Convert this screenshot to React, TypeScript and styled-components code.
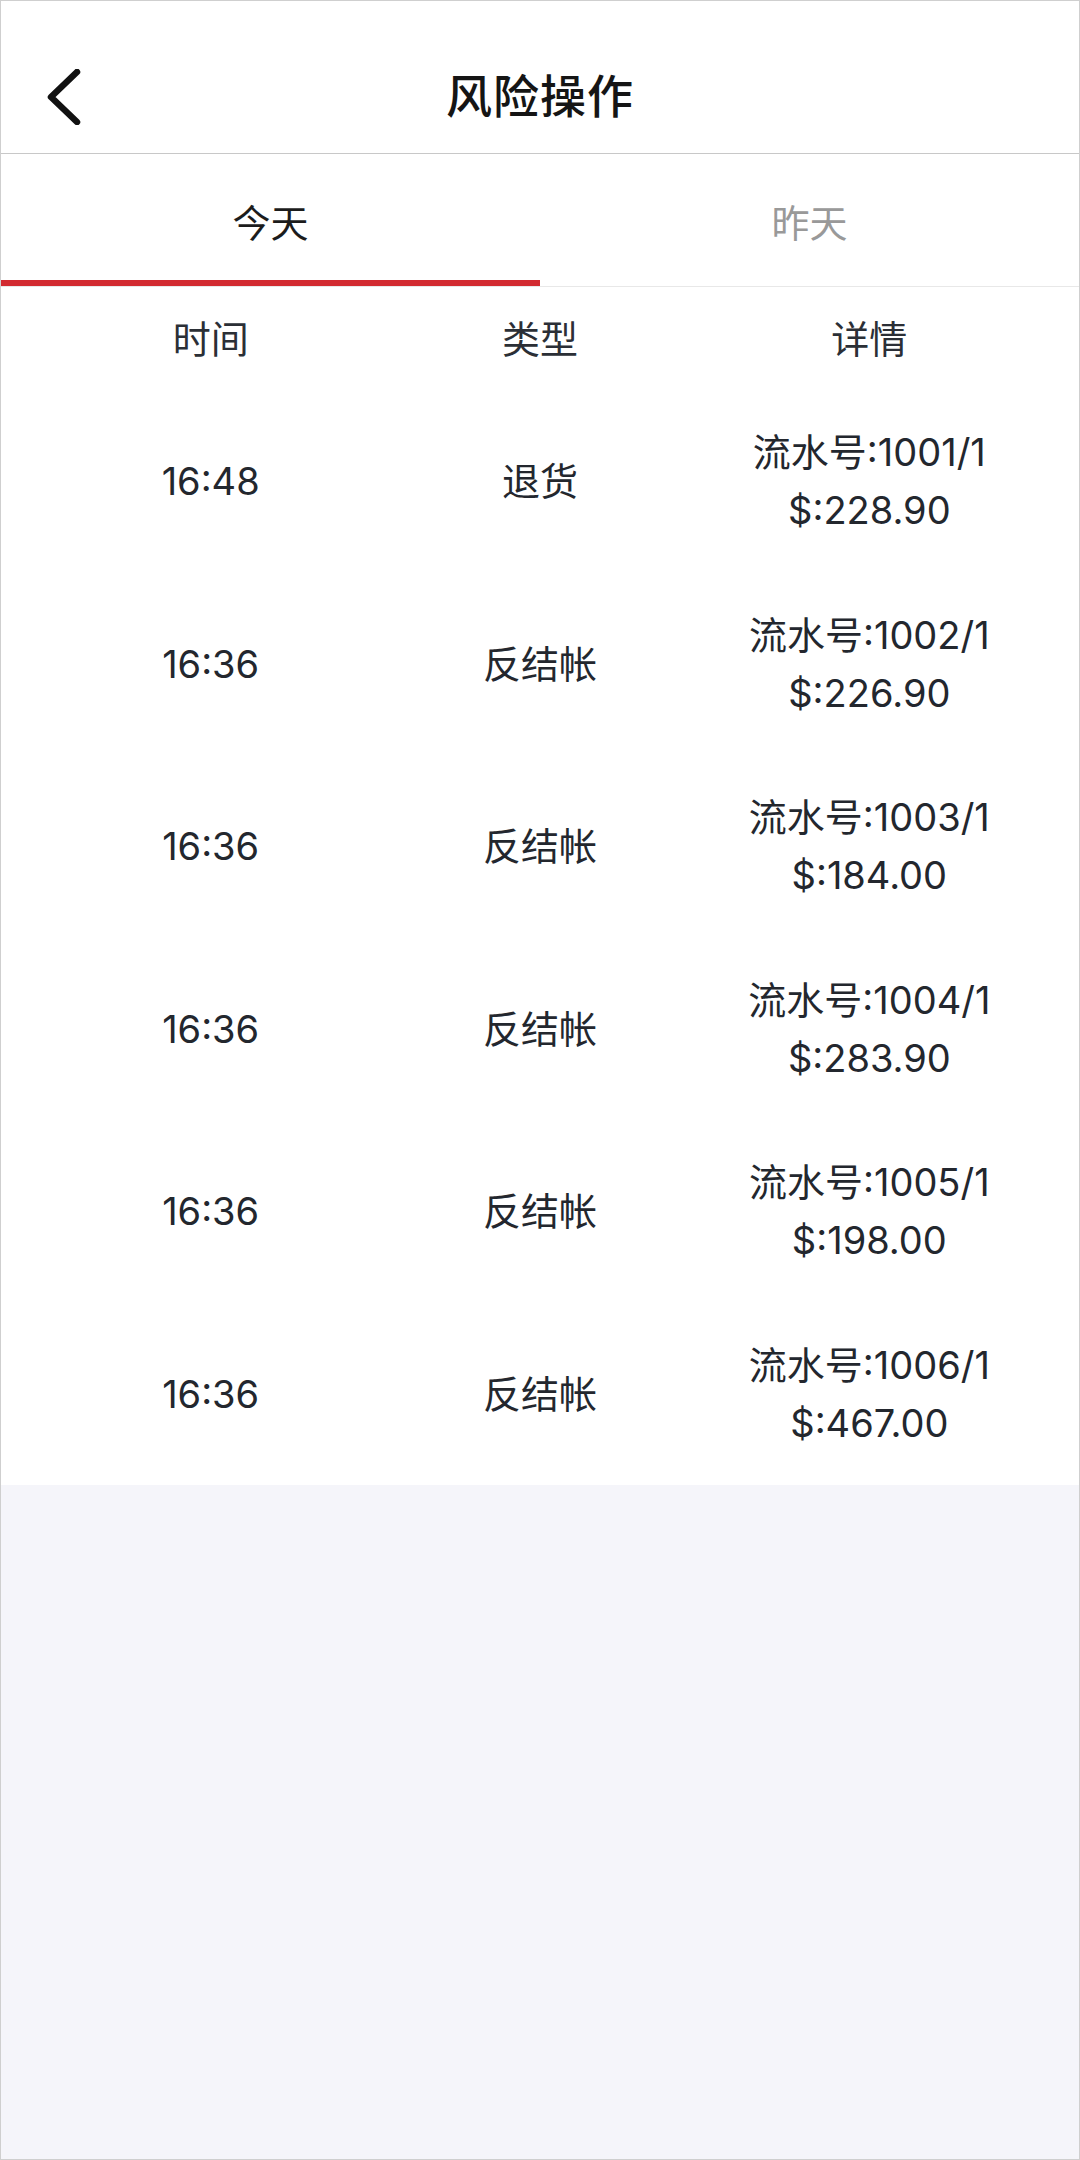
import React, { useState } from "react";
import styled, { createGlobalStyle } from "styled-components";

const GlobalStyle = createGlobalStyle`
  html, body {
    margin: 0;
    padding: 0;
    background: #f5f5fa;
  }
  * {
    box-sizing: border-box;
  }
`;

const FONT = `Inter, "Noto Sans CJK SC", "Noto Sans", sans-serif`;

const Page = styled.div`
  width: 1080px;
  min-height: 2160px;
  border: 1px solid #cfcfcf;
  background: #f5f5fa;
  display: flex;
  flex-direction: column;
  font-family: ${FONT};
  color: #23272e;
`;

const Header = styled.header`
  height: 153px;
  padding-top: 32px;
  background: #fff;
  border-bottom: 1px solid #c8c8c8;
  display: grid;
  grid-template-columns: 1fr auto 1fr;
  align-items: center;
`;

const BackButton = styled.button`
  justify-self: start;
  margin-left: 43px;
  margin-top: 8px;
  padding: 0;
  border: none;
  background: none;
  display: flex;
  cursor: pointer;
`;

const Title = styled.h1`
  margin: 0;
  font-size: 46px;
  font-weight: 500;
  color: #151515;
  letter-spacing: 1px;
`;

const TabBar = styled.nav`
  height: 133px;
  background: #fff;
  border-bottom: 1px solid #e8e8e8;
  display: grid;
  grid-template-columns: 1fr 1fr;
`;

const Tab = styled.div<{ $active?: boolean }>`
  display: flex;
  align-items: center;
  justify-content: center;
  font-size: 38px;
  color: ${(p) => (p.$active ? "#1c1c1c" : "#999999")};
  box-shadow: ${(p) => (p.$active ? "inset 0 -6px 0 #d22a30" : "none")};
  cursor: pointer;
`;

const Table = styled.section`
  background: #fff;
  padding: 0 45px;
`;

const HeadRow = styled.div`
  height: 103px;
  display: grid;
  grid-template-columns: repeat(3, 1fr);
  align-items: center;
`;

const Row = styled.div`
  height: 182.5px;
  display: grid;
  grid-template-columns: repeat(3, 1fr);
  align-items: center;
`;

const Cell = styled.div`
  text-align: center;
  font-size: 38px;
  line-height: 58px;
  color: #23272e;
  white-space: nowrap;
`;

const HeadCell = styled(Cell)`
  color: #2b2f36;
`;

type Record = {
  time: string;
  type: string;
  serial: string;
  amount: string;
};

const today: Array<Record> = [
  { time: "16:48", type: "退货", serial: "1001/1", amount: "228.90" },
  { time: "16:36", type: "反结帐", serial: "1002/1", amount: "226.90" },
  { time: "16:36", type: "反结帐", serial: "1003/1", amount: "184.00" },
  { time: "16:36", type: "反结帐", serial: "1004/1", amount: "283.90" },
  { time: "16:36", type: "反结帐", serial: "1005/1", amount: "198.00" },
  { time: "16:36", type: "反结帐", serial: "1006/1", amount: "467.00" },
];

const ChevronLeft = () => (
  <svg width="40" height="56" viewBox="0 0 40 56" fill="none">
    <path
      d="M33 3L7 28L33 53"
      stroke="#111"
      strokeWidth="6.5"
      strokeLinecap="round"
      strokeLinejoin="round"
    />
  </svg>
);

export default function App() {
  const [tab, setTab] = useState<number>(0);
  const list = tab === 0 ? today : [];

  return (
    <>
      <GlobalStyle />
      <Page>
        <Header>
          <BackButton aria-label="back">
            <ChevronLeft />
          </BackButton>
          <Title>风险操作</Title>
        </Header>

        <TabBar>
          <Tab $active={tab === 0} onClick={() => setTab(0)}>
            今天
          </Tab>
          <Tab $active={tab === 1} onClick={() => setTab(1)}>
            昨天
          </Tab>
        </TabBar>

        <Table>
          <HeadRow>
            <HeadCell>时间</HeadCell>
            <HeadCell>类型</HeadCell>
            <HeadCell>详情</HeadCell>
          </HeadRow>
          {list.map((item, index) => (
            <Row key={index}>
              <Cell>{item.time}</Cell>
              <Cell>{item.type}</Cell>
              <Cell>
                流水号:{item.serial}
                <br />
                $:{item.amount}
              </Cell>
            </Row>
          ))}
        </Table>
      </Page>
    </>
  );
}
